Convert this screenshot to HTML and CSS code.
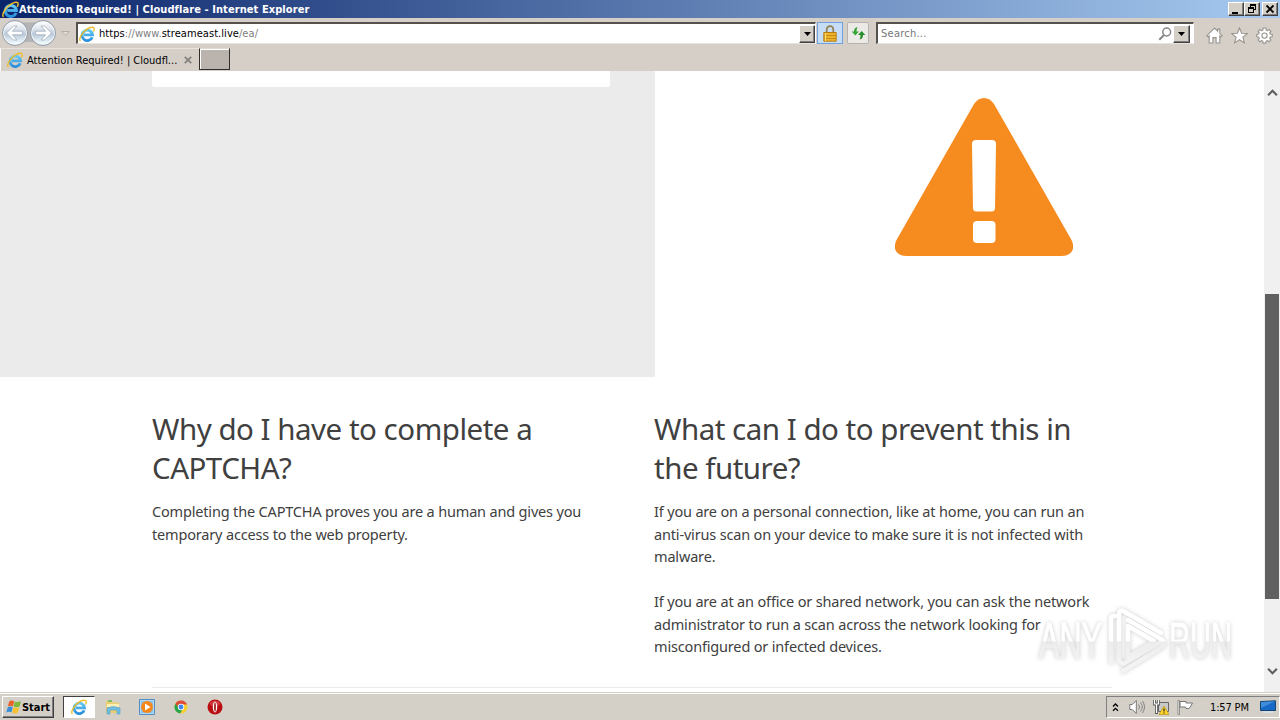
FILE: index.html
```html
<!DOCTYPE html>
<html lang="en">

<head>
    <meta charset="utf-8">
    <title>Attention Required! | Cloudflare</title>
    <link rel="stylesheet" href="styles.css">
</head>

<body>
    <!-- shared icons -->
    <svg class="defs" width="0" height="0">
        <defs>
            <linearGradient id="ie-blue" x1="0" y1="0" x2="0" y2="1">
                <stop offset="0" stop-color="#62c7f2" />
                <stop offset="1" stop-color="#2a8fdc" />
            </linearGradient>
            <linearGradient id="glass" x1="0" y1="0" x2="0" y2="1">
                <stop offset="0" stop-color="#fdfdfe" />
                <stop offset="0.3" stop-color="#dfe5ec" />
                <stop offset="0.55" stop-color="#b9c9da" />
                <stop offset="1" stop-color="#f2fdff" />
            </linearGradient>
        </defs>
        <symbol id="ie" viewBox="0 0 16 16">
            <path d="M13.200 11.200A5.200 5.200 0 1 1 13.500 8.900H5" fill="none" stroke="url(#ie-blue)" stroke-width="2.800" />
            <path d="M1.400 15C-.6 13 3 6.300 8 3.200c3.600-2.300 7.300-3 7.200-.2 0 .8-.4 1.700-.9 2.500" fill="none" stroke="#f0bd27" stroke-width="1.400" />
        </symbol>
        <symbol id="down" viewBox="0 0 7 4">
            <path d="M0 0h7L3.500 4z" />
        </symbol>
    </svg>

    <div class="titlebar">
        <svg class="title-icon"><use href="#ie" /></svg>
        <span class="title-text">Attention Required! | Cloudflare - Internet Explorer</span>
        <div class="window-buttons">
            <button><svg viewBox="0 0 14 12"><path d="M3 9h6v2H3z" /></svg></button>
            <button><svg viewBox="0 0 14 12"><path d="M5 1h6v6H9V6h1V3H6v1H5zM3 4h6v6H3zM4 6v3h4V6z" fill-rule="evenodd" /></svg></button>
            <button class="close"><svg viewBox="0 0 14 12"><path d="M3.500 2.500l7 7m0-7l-7 7" fill="none" stroke="#000" stroke-width="1.800" /></svg></button>
        </div>
    </div>

    <div class="navbar">
        <svg class="history" viewBox="0 0 74 28">
            <path d="M10 2Q29 5 48 2L48 25Q29 21 10 25z" fill="#b4b3b5" />
            <g fill="#f4f6f8" stroke="#8f9aa8">
                <circle cx="15" cy="14" r="12.500" />
                <circle cx="43" cy="14" r="12.500" />
            </g>
            <g fill="url(#glass)">
                <circle cx="15" cy="14" r="11" />
                <circle cx="43" cy="14" r="11" />
            </g>
            <g fill="#fff" stroke="#a1adbc" stroke-width=".8">
                <path d="M6.500 14l7-7H17l-4.600 5.200h10v3.600h-10L17 21h-3.500z" />
                <path d="M51.500 14l-7-7H41l4.600 5.200h-10v3.600h10L41 21h3.500z" />
            </g>
            <path d="M61.500 12.500h8l-4 4z" fill="#dedad5" stroke="#aaa6a0" stroke-width=".8" />
        </svg>
        <div class="address">
            <svg class="page-icon"><use href="#ie" /></svg>
            <span class="url"><b>https</b>://www.<b>streameast.live</b>/ea/</span>
            <button class="drop"><svg><use href="#down" /></svg></button>
        </div>
        <div class="lock">
            <svg viewBox="0 0 14 17">
                <path d="M3.700 8V4.500a3.300 3.300 0 0 1 6.600 0V8" fill="none" stroke="#92804f" stroke-width="1.700" />
                <path d="M.8 7.500h12.400v8.700H.8z" fill="#edb32a" stroke="#b77d10" />
                <path d="M1 10.500h12M1 13.500h12" stroke="#c98b16" />
                <path d="M2.500 8v8" stroke="#ffe27c" />
            </svg>
        </div>
        <div class="refresh">
            <svg viewBox="0 0 15 14">
                <path d="M6.500 1Q3 1.500 3 5.500H.7L4.300 9.500 8 5.500H5.500Q5.500 2.500 6.500 1z" fill="#35a536" />
                <path d="M8.500 13.500Q12 13 12 9h2.300L10.700 5 7 9h2.500Q9.500 12 8.500 13.500z" fill="#278e2b" />
            </svg>
        </div>
        <div class="search">
            <span>Search...</span>
            <svg class="magnifier" viewBox="0 0 14 14"><circle cx="8.700" cy="5" r="3.900" fill="none" stroke="#858585" stroke-width="1.500" /><path d="M6 8l-4.700 4.700" stroke="#858585" stroke-width="2" /></svg>
            <button class="drop"><svg><use href="#down" /></svg></button>
        </div>
        <div class="tools">
            <svg viewBox="0 0 16 16"><path d="M8 1L.8 8.200l1.200 1L3 8.400V15h3.500v-5h3v5H13V8.400l1 .8 1.200-1L13 6V2h-2v2z" /></svg>
            <svg viewBox="0 0 16 16"><path d="M8 .8l2 5.100 5.300.3-4.100 3.400 1.400 5.300L8 12l-4.600 2.900 1.400-5.300L.7 6.200 6 5.900z" /></svg>
            <svg viewBox="0 0 16 16"><path d="M6.700 1h2.600l.3 1.900 1.200.5 1.500-1.100 1.700 1.700-1.100 1.500.5 1.200 1.900.3v2.200l-1.900.3-.5 1.200 1.100 1.500-1.700 1.700-1.500-1.100-1.200.5-.3 1.900H6.700l-.3-1.900-1.200-.5-1.500 1.100L2 12.200l1.100-1.500-.5-1.200L.7 9.200V7l1.900-.3.500-1.200L2 4l1.700-1.700 1.500 1.100 1.200-.5z" /><circle cx="8" cy="8.100" r="2.500" /></svg>
        </div>
    </div>

    <div class="tabs">
        <div class="tab">
            <svg class="page-icon"><use href="#ie" /></svg>
            <span>Attention Required! | Cloudfl...</span>
            <svg class="tab-close" viewBox="0 0 8 8"><path d="M.8.8l6.400 6.400m0-6.400L.8 7.200" /></svg>
        </div>
        <div class="new-tab"></div>
    </div>

    <div class="viewport">
        <div class="page">
            <div class="hero">
                <div class="captcha-area">
                    <div class="captcha-box"></div>
                </div>
                <div class="warning">
                    <svg viewBox="0 0 178 158">
                        <path d="M79 6C84-2 94-2 99 6L176.500 142C181 151 176 158 167 158H11C2 158-3 151 1.500 142z" fill="#f68b1f" />
                        <path d="M81 42h16q4 0 4 4l-1 64q0 3.500-3.500 3.500h-15q-3.500 0-3.500-3.500L77 46q0-4 4-4z" fill="#fff" />
                        <rect x="78" y="123" width="22.500" height="22" rx="4" fill="#fff" />
                    </svg>
                </div>
            </div>
            <div class="columns">
                <div class="column">
                    <h2>Why do I have to complete a<br>CAPTCHA?</h2>
                    <p>Completing the CAPTCHA proves you are a human and gives you<br>temporary access to the web property.</p>
                </div>
                <div class="column">
                    <h2>What can I do to prevent this in<br>the future?</h2>
                    <p>If you are on a personal connection, like at home, you can run an<br>anti-virus scan on your device to make sure it is not infected with<br>malware.</p>
                    <p>If you are at an office or shared network, you can ask the network<br>administrator to run a scan across the network looking for<br>misconfigured or infected devices.</p>
                </div>
            </div>
            <div class="footer-line"></div>
        </div>
        <div class="scrollbar">
            <svg viewBox="0 0 10 7"><path d="M1 5.500l4-4 4 4" /></svg>
            <div class="thumb"></div>
            <svg viewBox="0 0 10 7"><path d="M1 1.500l4 4 4-4" /></svg>
        </div>
    </div>

    <div class="taskbar">
        <button class="start">
            <svg viewBox="0 0 17 16">
                <path d="M3.500 2Q6 .5 8.700 1.800L7.400 7.300Q4.800 6.200 2 7.500z" fill="#e8622c" />
                <path d="M9.400 2.200Q12 3.500 16 2L14.400 7.500Q11 8.800 8.100 7.600z" fill="#7dba3c" />
                <path d="M1.800 8.200Q4.500 6.900 7.200 8L5.800 13.500Q3 12.500.3 13.800z" fill="#3a8fd8" />
                <path d="M7.900 8.300q2.700 1.200 6.200 0l-1.600 5.900Q9.500 15.500 6.500 14z" fill="#f6c230" />
            </svg>
            <span>Start</span>
        </button>
        <div class="tasks">
            <div class="task active"><svg viewBox="0 0 16 16"><use href="#ie" /></svg></div>
            <div class="task">
                <svg viewBox="0 0 16 16">
                    <path d="M1 2h5l1 1.500h7V14H1z" fill="#e9cf72" />
                    <path d="M3 1h4v2H3z" fill="#7fbd67" />
                    <path d="M2 5h12v3H2z" fill="#faf0b5" />
                    <path d="M2 9q6-3 13 0v6h-3v-4H5v4H2z" fill="#73bfe2" stroke="#4f9fc9" stroke-width=".6" />
                </svg>
            </div>
            <div class="task">
                <svg viewBox="0 0 16 16">
                    <path d="M.5.500h15v15H.5z" fill="#b9d9f2" stroke="#4e8fc8" />
                    <path d="M2 2h12v12H2z" fill="#8fc0e8" />
                    <circle cx="8" cy="8" r="5.900" fill="#f58716" />
                    <path d="M6 4.500l5.500 3.500L6 11.500z" fill="#fff" />
                </svg>
            </div>
            <div class="task">
                <svg viewBox="0 0 16 16">
                    <circle cx="8" cy="8" r="6.500" fill="#f9cf2e" />
                    <path d="M2.400 4.700A6.500 6.500 0 0 1 14 5.500H8L5.500 9.500z" fill="#dd4b39" />
                    <path d="M2.400 4.700L6.500 10l2.800.8L7.200 14.500A6.500 6.500 0 0 1 2.400 4.700z" fill="#2ba24c" />
                    <circle cx="8" cy="8" r="3.200" fill="#fff" />
                    <circle cx="8" cy="8" r="2.400" fill="#4285f4" />
                </svg>
            </div>
            <div class="task">
                <svg viewBox="0 0 16 16">
                    <circle cx="8" cy="8" r="7.500" fill="#b90d12" />
                    <path d="M2.500 4q5.500-5 11 0l-2 3h-7z" fill="#e0565a" opacity=".6" />
                    <ellipse cx="8" cy="8" rx="2.200" ry="5.400" fill="#fff" />
                    <ellipse cx="8" cy="8" rx="1" ry="4.700" fill="#a33" />
                </svg>
            </div>
        </div>
        <div class="tray">
            <svg class="chevrons" viewBox="0 0 7 9"><path d="M1 3.500L3.500 1 6 3.500M1 7.800l2.500-2.500L6 7.800" /></svg>
            <svg class="tray-icon" viewBox="0 0 16 16"><path d="M.8 5.500h2.500l4-4v13l-4-4H.8z" fill="#fff" stroke="#777" /><path d="M9.500 5.500q2 2.500 0 5M11.500 3.500q3.500 4.500 0 9M13.500 2q4 6 0 12" fill="none" stroke="#858585" /></svg>
            <svg class="tray-icon" viewBox="0 0 16 16"><path d="M5.500 3.500h10v9h-10z" fill="#c9c9c9" stroke="#666" /><path d="M1.500 1v4h4V1M3.500 5v10" fill="none" stroke="#555" stroke-width="2.800" /><path d="M1.500 1v4h4V1M3.500 5v9" fill="none" stroke="#fff" stroke-width="1.200" /><path d="M11 7l5 8.500H6z" fill="#ffd428" stroke="#b78b08" stroke-width=".6" /><path d="M11 9.500v3m0 1v1" stroke="#222" stroke-width="1.200" /></svg>
            <svg class="tray-icon flag" viewBox="0 0 16 16"><path d="M1 1.500h1.500v14H1z" fill="#fff" stroke="#777" stroke-width=".8" /><path d="M3 2.500h6v1.500h6.500L13 8.500Q12.500 10 9 9.500L8.500 8H3z" fill="#fff" stroke="#777" /></svg>
            <span class="clock">1:57 PM</span>
            <svg class="desktop" viewBox="0 0 16 14"><path d="M.5 1.500l15-.7v9.700H.5z" fill="#1769c7" stroke="#17436f" /><path d="M1 2l14-.7L1 8z" fill="#3f8bdc" /><path d="M3 12h10" stroke="#d8e4f0" stroke-width="1.500" /></svg>
        </div>
    </div>

    <!-- watermark -->
    <svg class="watermark" viewBox="0 0 220 74">
        <defs>
            <linearGradient id="fade" gradientUnits="userSpaceOnUse" x1="0" y1="16" x2="0" y2="58">
                <stop offset="0.500" stop-color="#fff" />
                <stop offset="0.520" stop-color="#ececec" />
                <stop offset="1" stop-color="#f3f3f3" />
            </linearGradient>
        </defs>
        <g fill="url(#fade)">
            <text x="8" y="54" textLength="63" lengthAdjust="spacingAndGlyphs">ANY</text>
            <text x="138" y="54" textLength="63" lengthAdjust="spacingAndGlyphs">RUN</text>
        </g>
        <g fill="none" stroke="url(#fade)" stroke-width="4.500" stroke-linejoin="round" stroke-linecap="round">
            <path d="M80 58V15q0-3 4-3" />
            <path d="M88 56V11q0-7 6-3l36 21M97 56V22l26 15-24 15" />
            <path d="M88 57l4 3 38-22M92 67l39-24q5-4-1-8L97 16" />
        </g>
    </svg>
</body>

</html>
```
FILE: styles.css
```css
* {
    box-sizing: border-box;
}

body {
    margin: 0;
    width: 1280px;
    height: 720px;
    overflow: hidden;
    display: flex;
    flex-direction: column;
    background: #d4d0c8;
    color: #000;
    font-family: "DejaVu Sans Condensed", "DejaVu Sans", sans-serif;
    font-stretch: condensed;
    font-size: 11px;
    position: relative;
}

svg {
    display: block;
    flex: none;
}

.defs {
    position: absolute;
}

button {
    font: inherit;
    padding: 0;
    display: flex;
    align-items: center;
    justify-content: center;
    background: #d4d0c8;
    border: 1px solid;
    border-color: #fff #404040 #404040 #fff;
    box-shadow: inset -1px -1px #808080;
}

.titlebar {
    height: 18px;
    flex: none;
    display: flex;
    align-items: center;
    padding: 0 2px;
    background: linear-gradient(to right, #0a246a, #a6caf0);
    color: #fff;
    font-weight: bold;
}

.title-icon {
    width: 17px;
    height: 17px;
}

.title-text {
    white-space: nowrap;
    letter-spacing: 0.08px;
}

.window-buttons {
    display: flex;
    margin-left: auto;
}

.window-buttons button {
    width: 16px;
    height: 14px;
}

.window-buttons svg {
    width: 14px;
    height: 12px;
}

.window-buttons .close {
    margin-left: 2px;
}

.navbar {
    height: 30px;
    flex: none;
    display: flex;
    align-items: center;
    background: #d5cfc8;
}

.history {
    width: 74px;
    height: 28px;
    margin-right: 2px;
}

.address,
.search {
    height: 22px;
    display: flex;
    align-items: center;
    background: #fff;
    border: 1px solid #808080;
    border-top: 2px solid #55514c;
    border-left: 2px solid #55514c;
    border-right-color: #fff;
    border-bottom-color: #e8e3dc;
}

.address {
    width: 740px;
}

.page-icon {
    width: 16px;
    height: 16px;
}

.address .page-icon {
    margin: 0 4px 0 1px;
}

.url {
    color: #808080;
    letter-spacing: 0.06px;
}

.url b {
    color: #000;
    font-weight: normal;
}

.drop {
    width: 16px;
    height: 18px;
    margin-left: auto;
}

.drop svg {
    width: 7px;
    height: 4px;
}

.lock,
.refresh {
    display: flex;
    align-items: center;
    justify-content: center;
}

.lock {
    width: 26px;
    height: 22px;
    margin-left: 1px;
    background: #c7dcf5;
    border: 1px solid #71a2df;
}

.lock svg {
    width: 14px;
    height: 17px;
}

.refresh {
    width: 22px;
    height: 22px;
    margin: 0 7px 0 4px;
    background: #eceae7;
    border: 1px solid #b7b4af;
    border-radius: 2px;
}

.refresh svg {
    width: 15px;
    height: 14px;
}

.search {
    width: 318px;
    padding: 0 3px;
    color: #777;
}

.search span {
    letter-spacing: 0.25px;
}

.magnifier {
    width: 14px;
    height: 14px;
    margin-left: auto;
}

.search .drop {
    width: 17px;
    margin-left: 1px;
}

.tools {
    display: flex;
    gap: 8px;
    margin: 4px 0 0 12px;
}

.tools svg {
    width: 17px;
    height: 17px;
    fill: #fff;
    stroke: #96928d;
    stroke-width: 1;
}

.tabs {
    height: 23px;
    flex: none;
    display: flex;
    background: #d5cfc8;
}

.tab {
    width: 199px;
    display: flex;
    align-items: center;
    padding-left: 6px;
    border-top: 1px solid #e7e3dd;
    border-left: 1px solid #fff;
    white-space: nowrap;
}

.tab span {
    width: 156px;
    margin: 0 1px 0 4px;
}

.tab-close {
    width: 8px;
    height: 8px;
    fill: none;
    stroke: #85817c;
    stroke-width: 1.8;
}

.new-tab {
    width: 31px;
    height: 22px;
    background: #bbb4ae;
    border: 1px solid #302d2b;
    border-top-color: #ded9d3;
    box-shadow: inset 1px 1px #fff;
}

.viewport {
    height: 621px;
    flex: none;
    display: flex;
    background: #fff;
}

.page {
    width: 1264px;
    color: #404040;
    font-family: "Noto Sans", sans-serif;
    font-stretch: normal;
}

.hero {
    height: 306px;
    display: flex;
}

.captcha-area {
    width: 655px;
    padding-left: 152px;
    background: #ebebeb;
}

.captcha-box {
    width: 458px;
    height: 16px;
    background: #fff;
    border-radius: 0 0 2px 2px;
}

.warning {
    padding: 27px 0 0 240px;
}

.warning svg {
    width: 178px;
    height: 158px;
}

.columns {
    height: 310px;
    display: flex;
    padding: 32px 0 0 152px;
}

.column {
    width: 502px;
    white-space: nowrap;
}

h2 {
    margin: 0 0 13px;
    font-size: 29.5px;
    font-weight: normal;
    line-height: 39px;
    letter-spacing: -0.49px;
}

p {
    margin: 0 0 22.5px;
    font-size: 14.5px;
    line-height: 22.5px;
    letter-spacing: -0.17px;
}

.footer-line {
    width: 960px;
    height: 1px;
    margin-left: 152px;
    background: #ebebeb;
}

.scrollbar {
    width: 16px;
    display: flex;
    flex-direction: column;
    align-items: center;
    justify-content: space-between;
    padding: 18px 0 17px;
    background: #f0f0f0;
}

.scrollbar svg {
    width: 11px;
    height: 8px;
    fill: none;
    stroke: #606060;
    stroke-width: 2;
}

.thumb {
    width: 14px;
    height: 305px;
    margin-top: 129px;
    background: #606060;
}

.taskbar {
    height: 28px;
    flex: none;
    display: flex;
    align-items: center;
    padding: 1px 0 0 2px;
    background: #d4d0c8;
    border-top: 1px solid #d4d0c8;
    box-shadow: inset 0 1px #fff;
}

.start {
    width: 52px;
    height: 22px;
    font-weight: bold;
}

.start svg {
    width: 16px;
    height: 16px;
}

.tasks {
    display: flex;
    margin-left: 9px;
    gap: 2px;
}

.task {
    width: 32px;
    height: 22px;
    display: flex;
    align-items: center;
    justify-content: center;
}

.task.active {
    background: #fff;
    border: 1px solid;
    border-color: #404040 #fff #fff #404040;
}

.task svg {
    width: 16px;
    height: 16px;
}

.tray {
    width: 174px;
    height: 22px;
    display: flex;
    align-items: center;
    margin-left: auto;
    padding-left: 5px;
    border: 1px solid;
    border-color: #808080 #fff #fff #808080;
}

.chevrons {
    width: 7px;
    height: 9px;
    margin-right: 10px;
    fill: none;
    stroke: #000;
    stroke-width: 1.3;
}

.tray-icon {
    width: 16px;
    height: 16px;
    margin-right: 8px;
}

.clock {
    width: 50px;
    margin-left: 9px;
    letter-spacing: -0.15px;
    white-space: nowrap;
}

.desktop {
    width: 16px;
    height: 14px;
}

/* lies over the page */
.watermark {
    position: absolute;
    left: 1031px;
    top: 604px;
    width: 220px;
    height: 74px;
    overflow: visible;
    filter: drop-shadow(0 0 2px rgba(0, 0, 0, 0.2));
}

.watermark text {
    font-family: "Liberation Sans", Arial, sans-serif;
    font-stretch: normal;
    font-size: 50px;
    stroke: url(#fade);
    stroke-width: 1px;
}
```
